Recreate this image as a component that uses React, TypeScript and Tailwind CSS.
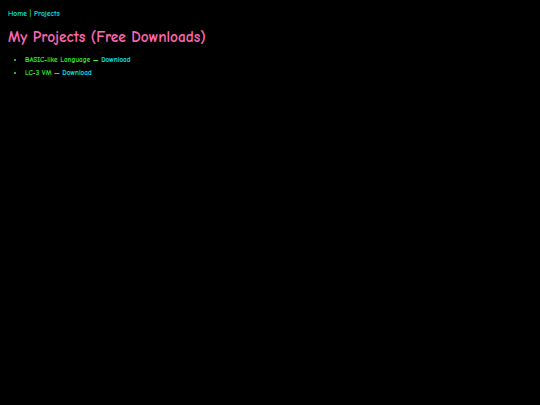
export default function App() {
  return (
    <div className="min-h-[405px] bg-black px-2 py-2 font-['Comic_Sans_MS','Comic_Neue',cursive]">
      <nav className="text-[7.5px] leading-[12px] font-bold text-[#00e0e0]">
        <a href="#">Home</a> <span className="text-[#33dd33]">|</span> <a href="#">Projects</a>
      </nav>
      <h1 className="mt-[7px] text-[15.3px] leading-[20px] font-bold text-[#ff69b4]">My Projects (Free Downloads)</h1>
      <ul className="mt-[7px] pl-[17px] list-disc text-[7.2px] leading-[13px] font-bold text-[#33ee33] marker:text-[#33ee33]">
        <li>
          BASIC-like Language — <a href="#" className="text-[#00e8e8]">Download</a>
        </li>
        <li>
          LC-3 VM — <a href="#" className="text-[#00e8e8]">Download</a>
        </li>
      </ul>
    </div>
  );
}
